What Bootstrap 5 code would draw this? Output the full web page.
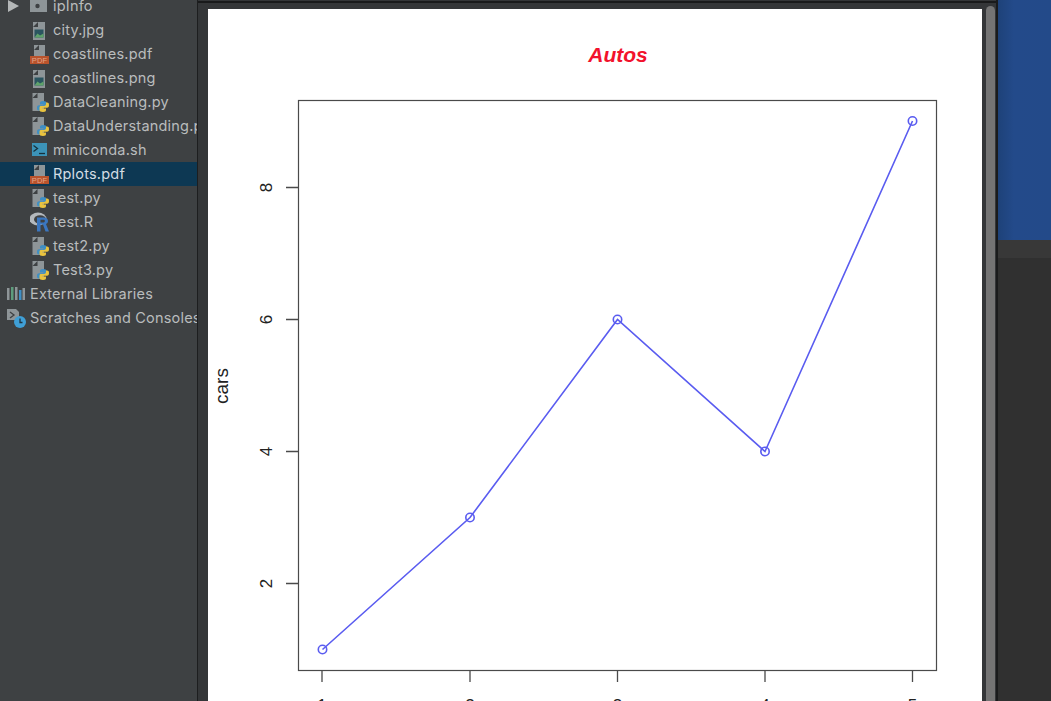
<!DOCTYPE html>
<html lang="en">
<head>
    <meta charset="UTF-8">
    <title>Rplots.pdf</title>
    <link href="https://cdn.jsdelivr.net/npm/bootstrap@5.3.3/dist/css/bootstrap.min.css" rel="stylesheet">
    <style>
        html, body { height: 100%; background: #303030; overflow: hidden; }
        .ide-root { height: 701px; }
        .project-tree { width: 197px; background: #3e4143; color: #b9bcbd; font-family: "Inter", "Liberation Sans", sans-serif; font-size: 14.5px; letter-spacing: 0.2px; }
        .tree-list { margin-top: -6px; }
        .tree-row { height: 24px; white-space: nowrap; line-height: 24px; }
        .tree-row.lvl-file { padding-left: 30px; }
        .tree-row.lvl-root { padding-left: 7px; }
        .tree-row.picked { background: #0d3853; color: #d3dde4; }
        .tree-row svg { flex: none; width: 22px; height: 22px; margin-right: 1px; }
        .folder-arrow { width: 0; height: 0; border-left: 11px solid #b4b7b8; border-top: 6px solid transparent; border-bottom: 6px solid transparent; margin: 0 11px 0 1px; flex: none; }
        .plot-window { width: 801px; background: #343638; border-left: 1px solid #1d1e1f; border-right: 2px solid #1a1b1c; padding-top: 1px; }
        .window-edge { height: 2px; background: #191a1b; }
        .window-body { padding: 6px 0 0 10px; }
        .plot-page { width: 774px; height: 692px; background: #fff; }
        .plot-page svg { display: block; }
        .plot-label { font-family: "Liberation Sans", Arial, sans-serif; font-size: 17px; fill: #222; }
        .plot-label.axis-name { font-size: 19px; }
        .plot-title { font-family: "Liberation Sans", Arial, sans-serif; font-size: 21px; font-weight: 700; font-style: italic; fill: #f2122c; }
        .plot-scroll { width: 14px; padding-left: 4px; padding-top: 3px; }
        .scroll-thumb { width: 9px; background: #747474; border-radius: 5px 5px 0 0; }
        .side-panel { background: #303030; }
        .blue-band { height: 240px; background: linear-gradient(90deg, #1e4279 0, #234a8a 30%, #234a89 100%); }
        .grey-band { height: 18px; background: #383838; }
    </style>
</head>
<body>

    <svg width="0" height="0" class="position-absolute">
        <defs>
            <symbol id="imageFile" viewBox="0 0 22 22">
                <path d="M3 3h12v18H3z" fill="#8e9598"/>
                <path d="M3 8l5-5v5z" fill="#3e4143"/>
                <rect x="4.500" y="10.500" width="9" height="8" fill="#2b5560"/>
                <path d="M4.500 18.500l3-4 2.500 2 3.500-2v4z" fill="#5fa36a"/>
            </symbol>
            <symbol id="pdfFile" viewBox="0 0 22 22">
                <path d="M4 2h11v12H4z" fill="#8e9598"/>
                <path d="M4 7l5-5v5z" fill="#3e4143"/>
                <rect x="0" y="13" width="19" height="8" fill="#b9532c"/>
                <text x="9.500" y="19.700" text-anchor="middle" font-family="Liberation Sans, sans-serif" font-size="7.500" fill="#e3a58a">PDF</text>
            </symbol>
            <symbol id="pyFile" viewBox="0 0 22 22">
                <path d="M2.500 2h11.500v18H2.500z" fill="#8e9598"/>
                <path d="M2.500 7l5-5v5z" fill="#3e4143"/>
                <path d="M13 10c-2.500 0-3 1-3 2v1.500h3.500v.7H9c-1.500 0-2 1-2 2.800 0 1.800.7 2.500 2 2.500h1v-1.500c0-1.200 1-2 2-2h3c1 0 1.500-.7 1.500-1.500V12c0-1.200-1-2-3.500-2z" fill="#3f8fc4"/>
                <path d="M13 10c-2.500 0-3 1-3 2v1.500h3.500v.7H9c-1.500 0-2 1-2 2.800 0 1.800.7 2.500 2 2.500h1v-1.500c0-1.200 1-2 2-2h3c1 0 1.500-.7 1.500-1.500V12c0-1.200-1-2-3.500-2z" fill="#e9c33f" transform="rotate(180 13 15.500)"/>
            </symbol>
            <symbol id="shellFile" viewBox="0 0 22 22">
                <rect x="2" y="4" width="15" height="13" fill="#3c93b8"/>
                <path d="M3.500 6.500l4 3-4 3" fill="none" stroke="#16323d" stroke-width="1.300"/>
                <path d="M9 14.500h6" stroke="#16323d" stroke-width="1.300"/>
            </symbol>
            <symbol id="rFile" viewBox="0 0 22 22">
                <ellipse cx="8" cy="8" rx="8.500" ry="6.500" fill="#b4b9bd"/>
                <ellipse cx="10" cy="8.500" rx="6" ry="4.200" fill="#3e4143"/>
                <path d="M7 6.500h7c2.500 0 4 1.500 4 3.500 0 1.500-.8 2.500-2 3l3 7.500h-3.500L13 13.500h-2.500v7H7z" fill="#3a76bf"/>
                <path d="M10.500 8.800v2.600H13.500c1 0 1.300-.5 1.300-1.300s-.4-1.300-1.300-1.300z" fill="#3e4143"/>
            </symbol>
        </defs>
    </svg>

    <div class="ide-root d-flex">

        <!-- Project tree -->
        <div class="project-tree overflow-hidden flex-shrink-0">
            <div class="tree-list">
                <div class="tree-row lvl-root d-flex align-items-center">
                    <span class="folder-arrow"></span>
                    <svg viewBox="0 0 22 22"><path d="M0 1h6l2 2h9v14H0z" fill="#8e9598"/><circle cx="7.500" cy="11" r="2.200" fill="#3e4143"/></svg>
                    <span>ipInfo</span>
                </div>
                <div class="tree-row lvl-file d-flex align-items-center"><svg><use href="#imageFile"/></svg><span>city.jpg</span></div>
                <div class="tree-row lvl-file d-flex align-items-center"><svg><use href="#pdfFile"/></svg><span>coastlines.pdf</span></div>
                <div class="tree-row lvl-file d-flex align-items-center"><svg><use href="#imageFile"/></svg><span>coastlines.png</span></div>
                <div class="tree-row lvl-file d-flex align-items-center"><svg><use href="#pyFile"/></svg><span>DataCleaning.py</span></div>
                <div class="tree-row lvl-file d-flex align-items-center"><svg><use href="#pyFile"/></svg><span>DataUnderstanding.py</span></div>
                <div class="tree-row lvl-file d-flex align-items-center"><svg><use href="#shellFile"/></svg><span>miniconda.sh</span></div>
                <div class="tree-row lvl-file picked d-flex align-items-center"><svg><use href="#pdfFile"/></svg><span>Rplots.pdf</span></div>
                <div class="tree-row lvl-file d-flex align-items-center"><svg><use href="#pyFile"/></svg><span>test.py</span></div>
                <div class="tree-row lvl-file d-flex align-items-center"><svg><use href="#rFile"/></svg><span>test.R</span></div>
                <div class="tree-row lvl-file d-flex align-items-center"><svg><use href="#pyFile"/></svg><span>test2.py</span></div>
                <div class="tree-row lvl-file d-flex align-items-center"><svg><use href="#pyFile"/></svg><span>Test3.py</span></div>
                <div class="tree-row lvl-root d-flex align-items-center">
                    <svg viewBox="0 0 22 22">
                        <rect x="0" y="5" width="2.500" height="12" fill="#8e9598"/>
                        <rect x="4" y="4" width="2.500" height="13" fill="#5d9c7c"/>
                        <rect x="8" y="4" width="2.500" height="13" fill="#8e9598"/>
                        <rect x="12" y="7" width="2.500" height="10" fill="#3f8fc4"/>
                        <rect x="15.500" y="5" width="2.500" height="12" fill="#8e9598"/>
                    </svg>
                    <span>External Libraries</span>
                </div>
                <div class="tree-row lvl-root d-flex align-items-center">
                    <svg viewBox="0 0 22 22">
                        <path d="M0 2h9l3 3v8H0z" fill="#8e9598"/>
                        <path d="M3 5l4 3-4 3" fill="none" stroke="#3e4143" stroke-width="1.300"/>
                        <circle cx="13" cy="15" r="6" fill="#3f9fd6"/>
                        <path d="M13 11.500V15.500h2.500" fill="none" stroke="#1f3340" stroke-width="1.300"/>
                    </svg>
                    <span>Scratches and Consoles</span>
                </div>
            </div>
        </div>

        <!-- Plot preview window -->
        <div class="plot-window d-flex flex-column flex-shrink-0">
            <div class="window-edge"></div>
            <div class="d-flex flex-grow-1 overflow-hidden">
                <div class="window-body flex-grow-1">
                    <div class="plot-page">
                        <svg width="774" height="692" viewBox="208 9 774 692">
                            <text class="plot-title" x="618" y="62" text-anchor="middle">Autos</text>

                            <rect x="298.500" y="100.500" width="638" height="570" fill="none" stroke="#4a4a4a" stroke-width="1.200"/>

                            <g stroke="#4a4a4a" stroke-width="1.300">
                                <path d="M322 670v12M470 670v12M617.500 670v12M765 670v12M912.500 670v12"/>
                                <path d="M298 583.500h-12M298 451.500h-12M298 319.500h-12M298 187.500h-12"/>
                            </g>

                            <text class="plot-label" x="322" y="711" text-anchor="middle">1</text>
                            <text class="plot-label" x="470" y="711" text-anchor="middle">2</text>
                            <text class="plot-label" x="617.500" y="711" text-anchor="middle">3</text>
                            <text class="plot-label" x="765" y="711" text-anchor="middle">4</text>
                            <text class="plot-label" x="912.500" y="711" text-anchor="middle">5</text>
                            <text class="plot-label" transform="translate(272 583.500) rotate(-90)" text-anchor="middle">2</text>
                            <text class="plot-label" transform="translate(272 451.500) rotate(-90)" text-anchor="middle">4</text>
                            <text class="plot-label" transform="translate(272 319.500) rotate(-90)" text-anchor="middle">6</text>
                            <text class="plot-label" transform="translate(272 187.500) rotate(-90)" text-anchor="middle">8</text>
                            <text class="plot-label axis-name" transform="translate(228 386) rotate(-90)" text-anchor="middle">cars</text>

                            <g fill="none" stroke="#5a5cf0" stroke-width="1.600">
                                <path d="M322.500 649.500L470 517.500L617.500 319.500L765 451.500L912.500 121"/>
                                <circle cx="322.500" cy="649.500" r="4.200"/>
                                <circle cx="470" cy="517.500" r="4.200"/>
                                <circle cx="617.500" cy="319.500" r="4.200"/>
                                <circle cx="765" cy="451.500" r="4.200"/>
                                <circle cx="912.500" cy="121" r="4.200"/>
                            </g>
                        </svg>
                    </div>
                </div>
                <div class="plot-scroll flex-shrink-0 d-flex">
                    <div class="scroll-thumb"></div>
                </div>
            </div>
        </div>

        <!-- Right side of the IDE behind the window -->
        <div class="side-panel flex-grow-1">
            <div class="blue-band"></div>
            <div class="grey-band"></div>
        </div>
    </div>

    <script src="https://cdn.jsdelivr.net/npm/bootstrap@5.3.3/dist/js/bootstrap.bundle.min.js"></script>
</body>
</html>
